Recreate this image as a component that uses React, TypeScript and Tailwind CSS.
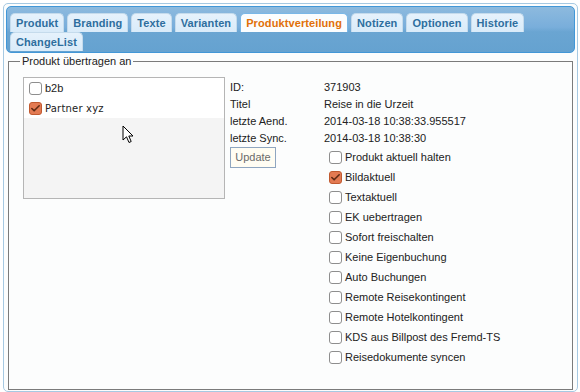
import { Check } from "lucide-react";

const tabs = ["Produkt", "Branding", "Texte", "Varianten", "Produktverteilung", "Notizen", "Optionen", "Historie", "ChangeList"];

const infos = [
  ["ID:", "371903"],
  ["Titel", "Reise in die Urzeit"],
  ["letzte Aend.", "2014-03-18 10:38:33.955517"],
  ["letzte Sync.", "2014-03-18 10:38:30"],
];

const optionen: [string, boolean][] = [
  ["Produkt aktuell halten", false],
  ["Bildaktuell", true],
  ["Textaktuell", false],
  ["EK uebertragen", false],
  ["Sofort freischalten", false],
  ["Keine Eigenbuchung", false],
  ["Auto Buchungen", false],
  ["Remote Reisekontingent", false],
  ["Remote Hotelkontingent", false],
  ["KDS aus Billpost des Fremd-TS", false],
  ["Reisedokumente syncen", false],
];

function Box({ checked }: { checked?: boolean }) {
  if (checked) {
    return (
      <span className="w-[13px] h-[13px] shrink-0 rounded-[3px] border border-[#c0592f] bg-[#e37a52] flex items-center justify-center">
        <Check className="w-[11px] h-[11px] text-[#5e2a14]" strokeWidth={3.5} />
      </span>
    );
  }
  return <span className="w-[13px] h-[13px] shrink-0 rounded-[3px] border border-[#8e8e8e] bg-white" />;
}

export default function App() {
  return (
    <div className="w-[580px] h-[392px] bg-white pt-[3px] pl-[3px] font-['Liberation_Sans',Arial,sans-serif] text-[11px] text-[#222] relative overflow-hidden">
      <div className="w-[575px] h-[389px] border border-[#a6c9e2] rounded-[5px] bg-[#fcfdfd] p-[2px]">
        {/* tab leiste */}
        <div className="h-[47px] border border-[#4297d7] rounded-[5px] bg-[linear-gradient(#8dbade,#79aedb_45%,#6aa5d2_55%,#65a2d0)] pl-[3px] pt-[6px]">
          <div className="flex flex-wrap gap-x-[3px]">
            {tabs.map((t) => {
              const aktiv = t === "Produktverteilung";
              return (
                <div
                  key={t}
                  className={
                    aktiv
                      ? "h-[19px] px-[5px] border border-b-0 border-[#79b7e7] rounded-t-[5px] bg-[#fbfdfe] text-[#e17009] font-bold leading-[18px] tracking-[0.1px]"
                      : "h-[19px] px-[5px] border border-b-0 border-[#c5dbec] rounded-t-[5px] bg-[linear-gradient(#e6f2fc,#d9ebf9)] text-[#2e6e9e] font-bold leading-[18px] tracking-[0.1px]"
                  }
                >
                  {t}
                </div>
              );
            })}
          </div>
        </div>

        <fieldset className="mt-[2px] ml-[2px] w-[565px] h-[335px] border border-[#7b7b7b] pl-[11px] pr-[8px]">
          <legend className="px-[2px] leading-[13px]">Produkt übertragen an</legend>
          <div className="flex mt-[9px] ml-[3px]">
            <div className="w-[202px] h-[122px] border border-[#b5b5b5] bg-[#f4f4f4]">
              <div className="h-[20px] bg-white flex items-center pl-[5px] gap-[3px]">
                <Box />
                <span>b2b</span>
              </div>
              <div className="h-[20px] bg-white flex items-center pl-[5px] gap-[3px]">
                <Box checked />
                <span className="font-['DejaVu_Sans',sans-serif] text-[10px] tracking-[0.2px]">Partner xyz</span>
              </div>
            </div>

            <div className="ml-[5px] mt-[2px]">
              {infos.map(([k, v]) => (
                <div key={k} className="h-[17px] flex items-center">
                  <span className="w-[94px]">{k}</span>
                  <span>{v}</span>
                </div>
              ))}
              <div className="flex">
                <div className="w-[94px]">
                  <button
                    type="button"
                    className="h-[21px] w-[46px] border border-[#8fa6c0] bg-[#fffdf3] text-[#6a6a6a] text-[11px]"
                  >
                    Update
                  </button>
                </div>
                <div className="pl-[5px]">
                  {optionen.map(([o, c]) => (
                    <div key={o} className="h-[20px] flex items-center gap-[3px]">
                      <Box checked={c} />
                      <span>{o}</span>
                    </div>
                  ))}
                </div>
              </div>
            </div>
          </div>
        </fieldset>
      </div>

      {/* mauszeiger */}
      <svg className="absolute left-[122px] top-[125px]" width="14" height="20" viewBox="0 0 14 20">
        <path d="M1 1 L1 15 L4.5 11.8 L7 17.5 L9.2 16.5 L6.8 11 L11 11 Z" fill="white" stroke="black" strokeWidth="1" strokeLinejoin="round" />
      </svg>
    </div>
  );
}
